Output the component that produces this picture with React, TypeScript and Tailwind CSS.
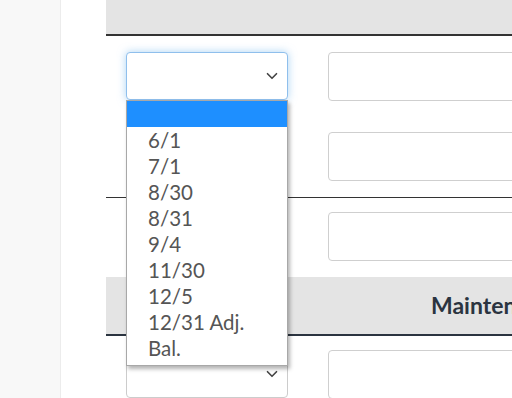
import { ChevronDown } from "lucide-react";

const dates = ["6/1", "7/1", "8/30", "8/31", "9/4", "11/30", "12/5", "12/31 Adj.", "Bal."];

function SelectBox({ focused = false }: { focused?: boolean }) {
  return (
    <div
      className={`flex h-[48px] w-[162px] items-center justify-end rounded-[4px] border bg-white pr-[6px] ${
        focused
          ? "border-[#8fbfec] shadow-[0_0_8px_rgba(102,175,233,0.55)]"
          : "border-[#cccccc]"
      }`}
    >
      <ChevronDown className="h-[18px] w-[18px] text-[#444]" strokeWidth={2.2} />
    </div>
  );
}

function TextBox() {
  return <div className="h-[49px] w-[260px] rounded-[4px] border border-[#cfcfcf] bg-white" />;
}

function Row({ pt, pb, select = true, focused = false }: { pt: string; pb: string; select?: boolean; focused?: boolean }) {
  return (
    <div className={`flex ${pt} ${pb}`}>
      <div className="w-[202px] shrink-0 px-[20px]">{select && <SelectBox focused={focused} />}</div>
      <div className="pl-[20px]">
        <TextBox />
      </div>
    </div>
  );
}

export default function App() {
  return (
    <div className="relative flex h-[398px] w-[512px] overflow-hidden bg-white font-['Lato','Liberation_Sans',sans-serif]">
      <div className="w-[61px] shrink-0 border-r border-[#ececec] bg-[#f8f8f8]" />
      <div className="shrink-0 pl-[45px]">
        <div className="w-[560px]">
          <div className="h-[36px] border-b-2 border-[#333] bg-[#e4e4e4]" />
          <Row pt="pt-[16px]" pb="pb-[16px]" focused />
          <div className="border-b border-[#333]">
            <Row pt="pt-[15px]" pb="pb-[16px]" />
          </div>
          <Row pt="pt-[14px]" pb="pb-[16px]" />
          <div className="flex h-[59px] items-center border-b-2 border-[#2b3440] bg-[#e4e4e4]">
            <div className="w-[325px] shrink-0" />
            <span className="text-[23px] font-bold text-[#2b3440]">Maintenance</span>
          </div>
          <Row pt="pt-[14px]" pb="pb-[16px]" />
        </div>
      </div>

      <div className="absolute left-[126px] top-[100px] w-[162px] border border-[#a8a8a8] bg-white shadow-[2px_3px_4px_rgba(0,0,0,0.3)]">
        <div className="h-[26px] bg-[#1e8fff]" />
        {dates.map((d) => (
          <div key={d} className="h-[26px] pl-[21px] text-[20.5px] leading-[26px] text-[#555]">
            {d}
          </div>
        ))}
        <div className="h-[4px]" />
      </div>
    </div>
  );
}
